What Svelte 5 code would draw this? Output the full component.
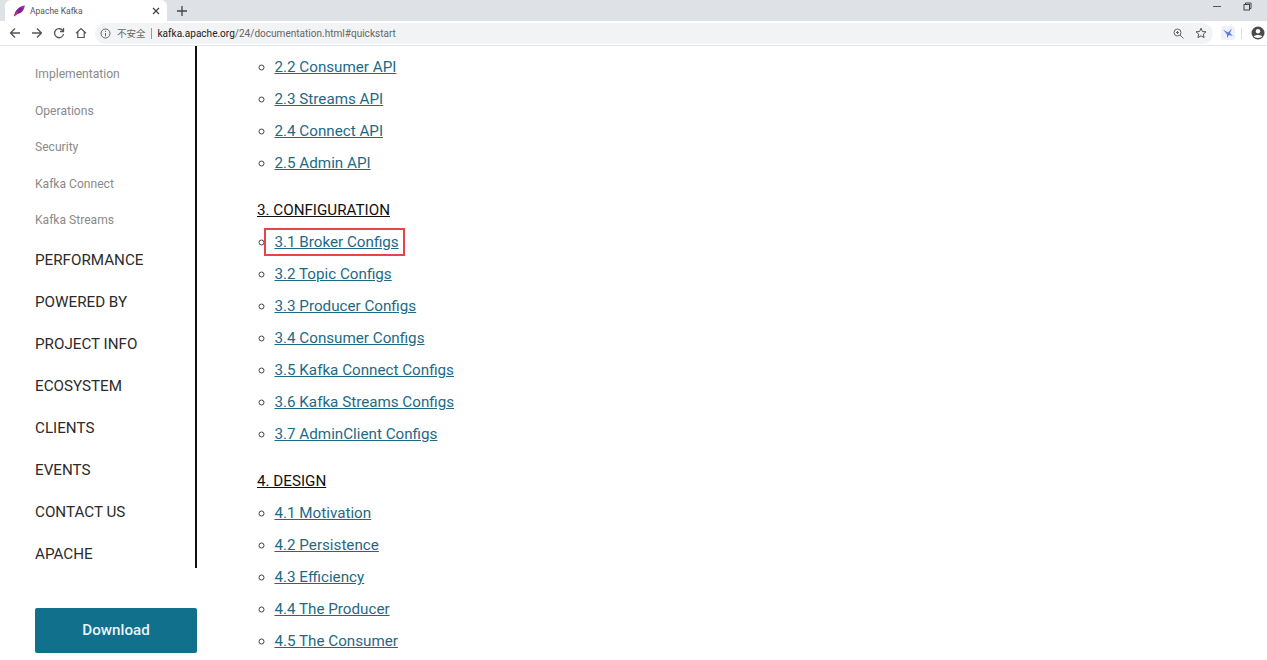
<script>
  const sub = ["Implementation", "Operations", "Security", "Kafka Connect", "Kafka Streams"];
  const main = ["PERFORMANCE", "POWERED BY", "PROJECT INFO", "ECOSYSTEM", "CLIENTS", "EVENTS", "CONTACT US", "APACHE"];
  const sections = [
    { items: ["2.2 Consumer API", "2.3 Streams API", "2.4 Connect API", "2.5 Admin API"] },
    { title: "3. CONFIGURATION", items: ["3.1 Broker Configs", "3.2 Topic Configs", "3.3 Producer Configs", "3.4 Consumer Configs", "3.5 Kafka Connect Configs", "3.6 Kafka Streams Configs", "3.7 AdminClient Configs"] },
    { title: "4. DESIGN", items: ["4.1 Motivation", "4.2 Persistence", "4.3 Efficiency", "4.4 The Producer", "4.5 The Consumer"] }
  ];
</script>

<div class="window">
  <div class="tabstrip">
    <div class="tab">
      <svg class="favicon" width="12" height="12" viewBox="0 0 12 12">
        <path d="M1 11.5 C1.5 6 6 1 11.5 0.5 C11.5 5 8 9 4 9 Z" fill="#7a1fa0" />
        <path d="M1 11.5 C1.5 9 3 7 5 6 L4.5 9 Z" fill="#e8274f" />
        <path d="M8 2.2 C9 1.5 10 1 11.5 0.5 C11.4 1.8 11 3 10.4 4 Z" fill="#c02a7c" />
      </svg>
      <span class="tabtitle">Apache Kafka</span>
      <svg class="tabclose" width="8" height="8" viewBox="0 0 8 8"><path d="M1 1 7 7M7 1 1 7" stroke="#444" stroke-width="1.3" /></svg>
    </div>
    <svg class="newtab" width="10" height="10" viewBox="0 0 10 10"><path d="M5 0V10M0 5H10" stroke="#444" stroke-width="1.3" /></svg>
    <div class="winbtns">
      <svg width="10" height="10" viewBox="0 0 10 10"><path d="M1 5.5H9" stroke="#555" /></svg>
      <svg width="9" height="9" viewBox="0 0 9 9" fill="none" stroke="#444"><rect x="1" y="2.5" width="5.5" height="5.5" /><path d="M2.5 2.5V1H8V6.5H6.5" /></svg>
    </div>
  </div>
  <div class="toolbar">
    <svg class="navicon" viewBox="0 0 12 12" fill="none" stroke="#555" stroke-width="1.3"><path d="M11 6H1.5M6 1.5 1.5 6 6 10.5" /></svg>
    <svg class="navicon" viewBox="0 0 12 12" fill="none" stroke="#555" stroke-width="1.3"><path d="M1 6H10.5M6 1.5 10.5 6 6 10.5" /></svg>
    <svg class="navicon" viewBox="0 0 12 12" fill="none" stroke="#555" stroke-width="1.3"><path d="M10 4A4.5 4.5 0 1 0 10.5 7M10.5 1V4.5H7" /></svg>
    <svg class="navicon" viewBox="0 0 12 12" fill="none" stroke="#555" stroke-width="1.2"><path d="M1 6.2 6 1.5 11 6.2M2.8 5V10.5H9.2V5" /></svg>
    <div class="omnibox">
      <svg class="info" width="11" height="11" viewBox="0 0 11 11" fill="none" stroke="#666"><circle cx="5.5" cy="5.5" r="4.5" /><path d="M5.5 5V8.2M5.5 2.8V4" /></svg>
      <span class="insecure">不安全</span>
      <span class="sep"></span>
      <span class="url"><b>kafka.apache.org</b>/24/documentation.html#quickstart</span>
      <svg class="zoomicon" width="11" height="11" viewBox="0 0 11 11" fill="none" stroke="#666"><circle cx="4.5" cy="4.5" r="3.5" /><path d="M7 7 10.5 10.5M3 4.5H6M4.5 3V6" /></svg>
      <svg class="star" width="12" height="12" viewBox="0 0 12 12" fill="none" stroke="#555"><path d="M6 1.2 7.4 4.5 11 4.8 8.3 7.1 9.1 10.6 6 8.8 2.9 10.6 3.7 7.1 1 4.8 4.6 4.5Z" /></svg>
    </div>
    <svg class="ext" width="14" height="14" viewBox="0 0 14 14"><rect width="14" height="14" rx="3" fill="#eef0fb" /><path d="M2 3.5 7 6.5 11 2.5 9 7 12 10 8 9 6 12 6 8.5Z" fill="#5a78e8" /></svg>
    <span class="tsep"></span>
    <svg class="avatar" width="14" height="14" viewBox="0 0 14 14"><circle cx="7" cy="7" r="6.5" fill="#4a4a4a" /><circle cx="7" cy="5.2" r="2.2" fill="#fff" /><path d="M2.8 10.6C4 8.6 10 8.6 11.2 10.6 10 12.3 4 12.3 2.8 10.6Z" fill="#fff" /></svg>
  </div>

  <div class="page">
    <aside class="sidebar">
      <nav class="nav">
        {#each sub as item}
          <a class="subitem" href="#top">{item}</a>
        {/each}
        {#each main as item}
          <a class="mainitem" href="#top">{item}</a>
        {/each}
      </nav>
      <a class="download" href="#top">Download</a>
    </aside>
    <main class="content">
      {#each sections as section}
        {#if section.title}
          <h4><a href="#top">{section.title}</a></h4>
        {/if}
        <ul>
          {#each section.items as item}
            <li>
              <a href="#top" class:boxed={item.startsWith("3.1")}>{item}</a>
            </li>
          {/each}
        </ul>
      {/each}
    </main>
  </div>
</div>

<style>
  :global(body) {
    margin: 0;
    background: #fff;
    overflow: hidden;
  }

  .window {
    width: 1267px;
    height: 660px;
    display: flex;
    flex-direction: column;
    overflow: hidden;
    font-family: Roboto, sans-serif;
  }

  .tabstrip {
    height: 21px;
    flex: none;
    display: flex;
    align-items: center;
    background: #dee1e6;
  }

  .tab {
    width: 162px;
    height: 21px;
    margin-left: 5px;
    padding: 0 7px 0 8px;
    box-sizing: border-box;
    display: flex;
    align-items: center;
    background: #fff;
    border-radius: 6px 6px 0 0;
  }

  .favicon {
    margin-right: 5px;
  }

  .tabtitle {
    flex: 1;
    font-size: 8.5px;
    color: #555;
  }

  .newtab {
    margin-left: 10px;
  }

  .winbtns {
    margin-left: auto;
    margin-right: 15px;
    display: flex;
    align-items: center;
    gap: 21px;
    padding-bottom: 9px;
  }

  .toolbar {
    height: 24px;
    flex: none;
    display: flex;
    align-items: center;
    padding: 0 0 0 9px;
    background: #fff;
    border-bottom: 1px solid #e4e4e4;
  }

  .navicon {
    width: 12px;
    height: 12px;
    margin-right: 10px;
    flex: none;
  }

  .omnibox {
    width: 1118px;
    flex: none;
    height: 21px;
    margin-left: -2px;
    padding: 0 6px 0 5px;
    box-sizing: border-box;
    display: flex;
    align-items: center;
    background: #f1f3f4;
    border-radius: 11px;
  }

  .info {
    flex: none;
  }

  .insecure {
    margin-left: 6px;
    font-size: 9.5px;
    color: #666;
    font-family: "Noto Sans CJK SC", sans-serif;
  }

  .sep {
    width: 1px;
    height: 11px;
    margin: 0 6px 0 5px;
    background: #999;
  }

  .url {
    flex: 1;
    font-size: 10.05px;
    color: #666;
  }

  .url b {
    font-weight: 400;
    color: #222;
  }

  .star {
    margin-left: 11px;
  }

  .ext {
    margin-left: 8px;
    flex: none;
  }

  .tsep {
    width: 1px;
    height: 11px;
    margin-left: 6px;
    background: #ddd;
    flex: none;
  }

  .avatar {
    margin-left: 9px;
    flex: none;
  }

  .page {
    flex: 1;
    min-height: 0;
    display: flex;
  }

  .sidebar {
    width: 197px;
    flex: none;
    box-sizing: border-box;
  }

  .nav {
    height: 522px;
    padding: 10px 0 0 35px;
    box-sizing: border-box;
    display: flex;
    flex-direction: column;
    border-right: 2px solid #111;
  }

  .subitem {
    height: 36.5px;
    line-height: 36.5px;
    font-size: 12.1px;
    color: #8a8a8a;
    text-decoration: none;
    flex: none;
  }

  .mainitem {
    height: 42.1px;
    line-height: 42.1px;
    font-size: 15.2px;
    color: #2b2b2b;
    text-decoration: none;
    flex: none;
  }

  .download {
    display: block;
    height: 45px;
    margin: 40px 0 0 35px;
    line-height: 45px;
    text-align: center;
    font-size: 15.2px;
    font-weight: 500;
    color: #e8f4f8;
    background: #11708c;
    border-radius: 2px;
    text-decoration: none;
  }

  .content {
    flex: 1;
    padding: 5px 0 0 60px;
    font-size: 15.2px;
  }

  h4 {
    margin: 15px 0 0;
    height: 32px;
    line-height: 32px;
    font-size: 15.2px;
    font-weight: 400;
  }

  h4 a {
    color: #111;
  }

  ul {
    margin: 0;
    padding: 0 0 0 17.5px;
    list-style: circle;
  }

  li {
    height: 32px;
    line-height: 32px;
    color: #444;
  }

  li a {
    color: #1d6a85;
    position: relative;
  }

  .boxed::after {
    content: "";
    position: absolute;
    left: -11px;
    right: -6px;
    top: -5px;
    bottom: -5px;
    border: 2px solid #e8434a;
  }
</style>
